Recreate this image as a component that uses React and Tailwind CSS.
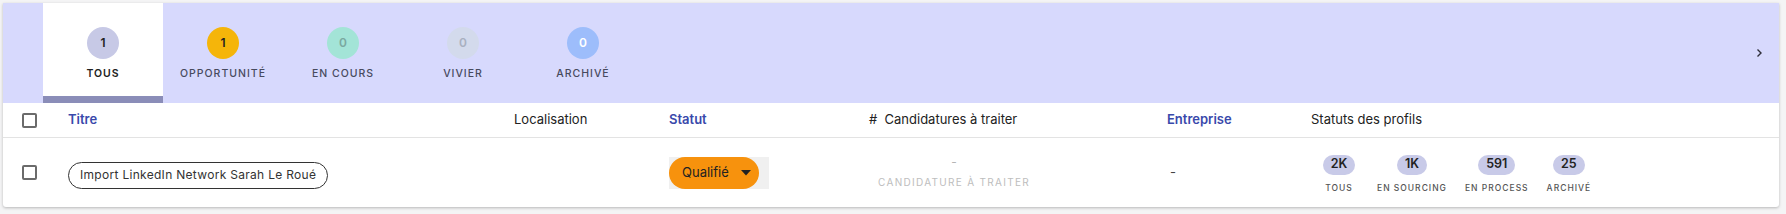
import React from "react";

const tabs = [
  { label: "TOUS", count: "1", circle: "bg-[#c7c9e6]", num: "text-[#222]", active: true },
  { label: "OPPORTUNITÉ", count: "1", circle: "bg-[#f5b50a]", num: "text-[#222]" },
  { label: "EN COURS", count: "0", circle: "bg-[#a3e4d7]", num: "text-[#7aa9a0]" },
  { label: "VIVIER", count: "0", circle: "bg-[#d3daec]", num: "text-[#a9b0c0]" },
  { label: "ARCHIVÉ", count: "0", circle: "bg-[#9dbdfb]", num: "text-white" },
];

const profils = [
  { n: "2K", l: "TOUS" },
  { n: "1K", l: "EN SOURCING" },
  { n: "591", l: "EN PROCESS" },
  { n: "25", l: "ARCHIVÉ" },
];

function Checkbox() {
  return <div className="w-[15px] h-[15px] border-2 border-[#6b6b6b] rounded-[2px] bg-white" />;
}

export default function App() {
  return (
    <div
      className="w-[1786px] h-[214px] bg-[#f4f4f5] pl-[3px] pr-[7px] pt-[3px]"
      style={{ fontFamily: "Inter, 'Noto Sans', sans-serif" }}
    >
      <div className="bg-white shadow-[0_1px_3px_rgba(0,0,0,0.25)] rounded-b-[3px]">
        {/* Tabs bar */}
        <div className="h-[100px] bg-[#d7d9fd] flex">
          <div className="w-[40px]" />
          <div className="flex flex-1">
            {tabs.map((t) => (
              <div
                key={t.label}
                className={`w-[120px] h-[100px] flex flex-col items-center relative ${t.active ? "bg-white" : ""}`}
              >
                <div
                  className={`mt-[24px] w-[32px] h-[32px] rounded-full flex items-center justify-center text-[12px] font-semibold ${t.circle} ${t.num}`}
                >
                  {t.count}
                </div>
                <div
                  className={`mt-[8px] text-[10.5px] leading-[14px] tracking-[1px] ${t.active ? "text-[#222] font-semibold" : "text-[#474a5e] font-medium"}`}
                >
                  {t.label}
                </div>
                {t.active && <div className="absolute left-0 right-0 bottom-0 h-[7px] bg-[#8a8db8]" />}
              </div>
            ))}
          </div>
          <div className="w-[40px] flex items-center justify-center">
            <svg width="8" height="10" viewBox="0 0 8 10">
              <polyline points="2.5,1.5 6,5 2.5,8.5" fill="none" stroke="#2f2f3a" strokeWidth="1.4" />
            </svg>
          </div>
        </div>

        {/* Header row */}
        <div className="grid grid-cols-[65px_446px_155px_200px_298px_144px_1fr] h-[35px] border-b border-[#e3e3e3] items-center text-[13px]">
          <div className="pl-[19px] flex items-center">
            <Checkbox />
          </div>
          <div className="text-[#3949ab] font-semibold">Titre</div>
          <div className="text-[#222]">Localisation</div>
          <div className="text-[#3949ab] font-semibold">Statut</div>
          <div className="text-[#222]">#&nbsp; Candidatures à traiter</div>
          <div className="text-[#3949ab] font-semibold">Entreprise</div>
          <div className="text-[#222]">Statuts des profils</div>
        </div>

        {/* Body row */}
        <div className="grid grid-cols-[65px_446px_155px_200px_298px_144px_1fr] h-[69px] items-center">
          <div className="pl-[19px] flex items-center">
            <Checkbox />
          </div>
          <div className="flex items-center pt-[5px]">
            <div className="h-[27px] px-[11px] rounded-full border border-[#333] flex items-center text-[12px] tracking-[0.3px] text-[#333]">
              Import LinkedIn Network Sarah Le Roué
            </div>
          </div>
          <div />
          <div className="flex items-center">
            <div className="w-[100px] h-[32px] bg-[#f0f0f0] flex">
              <div className="w-[90px] h-[32px] rounded-full bg-[#f7920d] flex items-center pl-[13px] text-[13px] text-[#222]">
                <span>Qualifié</span>
                <svg width="10" height="6" viewBox="0 0 10 6" className="ml-[12px]">
                  <polygon points="0,0 10,0 5,5.5" fill="#222" />
                </svg>
              </div>
            </div>
          </div>
          <div className="flex flex-col items-center w-[164px] pl-[6px] pt-[6px]">
            <div className="text-[12px] leading-[14px] text-[#b5b5b5] mt-[-8px]">-</div>
            <div className="mt-[7px] text-[10px] leading-[12px] tracking-[1.3px] text-[#bdbdbd]">
              CANDIDATURE À TRAITER
            </div>
          </div>
          <div className="text-[13px] text-[#444] pl-[3px]">-</div>
          <div className="flex pl-[8px] gap-[18px] pt-[3px]">
            {profils.map((p, i) => (
              <div key={p.l} className={`flex flex-col items-center ${i === 0 ? "min-w-[40px]" : ""}`}>
                <div className="h-[20px] min-w-[30px] px-[8px] rounded-full bg-[#c8cae8] flex items-center justify-center text-[12.5px] font-semibold text-[#222]">
                  {p.n}
                </div>
                <div className="mt-[8px] text-[8.5px] leading-[11px] tracking-[1px] font-medium text-[#555]">
                  {p.l}
                </div>
              </div>
            ))}
          </div>
        </div>
      </div>
    </div>
  );
}
